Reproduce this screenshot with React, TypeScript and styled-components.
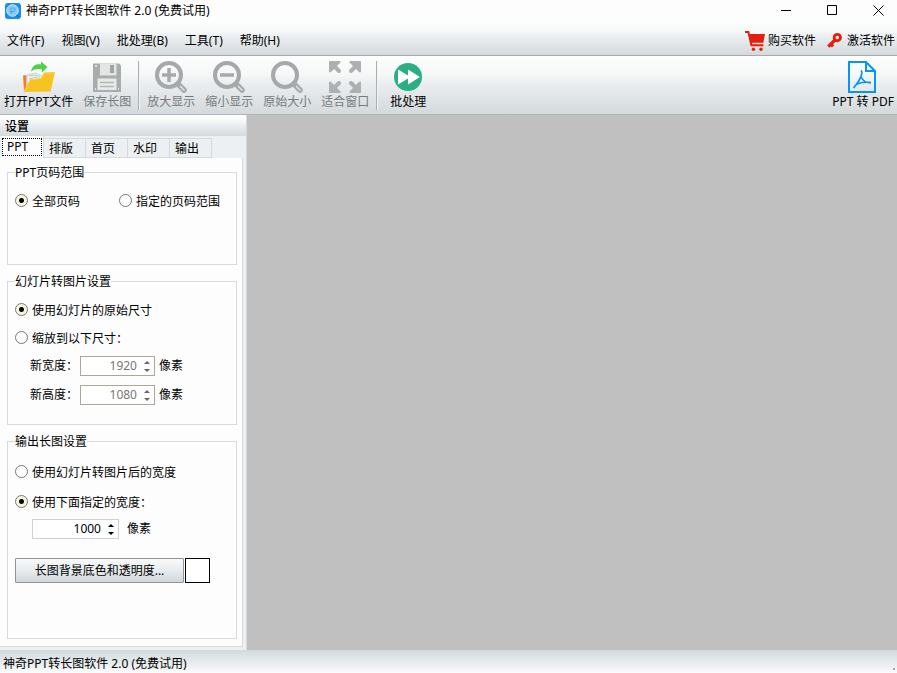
import React, { useState } from "react";
import styled, { createGlobalStyle, css } from "styled-components";

const GlobalStyle = createGlobalStyle`
  * { box-sizing: border-box; }
  body { margin: 0; background: #fdfdfd; }
  body, button, input {
    font-family: "Noto Sans", "Noto Sans CJK SC", sans-serif;
    font-size: 12px;
    line-height: 16px;
    color: #000;
  }
  button { background: none; border: 0; padding: 0; margin: 0; }
  svg { display: block; flex: none; }
`;

const barGradient = css`
  background: linear-gradient(#fdfdfd 0%, #f6f8f8 30%, #e9edef 50%, #d4d9dc 100%);
`;

const Window = styled.div`
  display: flex;
  flex-direction: column;
  min-height: 100vh;
`;

const TitleBar = styled.header`
  display: flex;
  align-items: center;
  height: 21px;
  padding-left: 5px;
  gap: 5px;
`;

const Title = styled.h1`
  flex: 1;
  margin: 0;
  font-size: 12px;
  font-weight: 400;
`;

const WindowControls = styled.div`
  display: flex;
  gap: 8px;
`;

const WindowButton = styled.button`
  display: flex;
  align-items: center;
  justify-content: center;
  width: 38px;
  height: 21px;
`;

const MenuBar = styled.nav`
  ${barGradient}
  display: flex;
  align-items: center;
  gap: 17px;
  height: 35px;
  padding: 5px 2px 0 7px;
  border-bottom: 1px solid #a8abad;
`;

const MenuButton = styled.button`
  white-space: nowrap;
`;

const MenuLinks = styled.div`
  display: flex;
  gap: 11px;
  margin-left: auto;
`;

const MenuLink = styled.a<{ $gap: number }>`
  display: flex;
  align-items: center;
  gap: ${(p) => p.$gap}px;
  height: 20px;
  color: #000;
  text-decoration: none;
  white-space: nowrap;
`;

const ToolBar = styled.div`
  ${barGradient}
  display: flex;
  align-items: flex-start;
  gap: 10px;
  height: 59px;
  padding: 5px 3px 0 4px;
  border-bottom: 1px solid #b2b5b7;
`;

const ToolButton = styled.button<{ $end?: boolean }>`
  display: flex;
  flex-direction: column;
  align-items: center;
  gap: 1px;
  min-width: 46px;
  white-space: nowrap;
  margin-left: ${(p) => (p.$end ? "auto" : "0")};
  &:disabled { color: #777b7d; }
`;

const Separator = styled.div`
  width: 2px;
  height: 49px;
  margin: 0 -3px;
  border-left: 1px solid #a9adaf;
  border-right: 1px solid #f3f5f6;
`;

const Body = styled.main`
  display: flex;
  flex: 1;
`;

const SidePanel = styled.aside`
  display: flex;
  flex-direction: column;
  flex: none;
  width: 247px;
  background: #ecf0f2;
  border-right: 1px solid #d5d9dc;
`;

const PanelHeading = styled.h2`
  ${barGradient}
  margin: 0;
  height: 21px;
  padding: 4px 5px 0;
  font-size: 12px;
  font-weight: 500;
`;

const TabStrip = styled.div`
  display: flex;
  align-items: flex-end;
  height: 22px;
  padding-left: 2px;
`;

const Tab = styled.button<{ $active: boolean }>`
  width: 42px;
  height: 20px;
  padding: 2px 5px 0;
  text-align: left;
  border: 1px solid #d5dadc;
  border-left: 0;
  ${(p) =>
    p.$active &&
    css`
      height: 22px;
      padding: 2px 1px 2px 0;
      background: #fdfdfd;
      border-top: 0;
      border-bottom: 0;
    `}
`;

const FocusFrame = styled.span`
  display: block;
  height: 18px;
  padding-left: 4px;
  border: 1px dotted #000;
`;

const TabPage = styled.div`
  display: flex;
  flex-direction: column;
  flex: 1;
  gap: 8px;
  margin: 0 3px 3px 0;
  padding: 6px 5px 7px 7px;
  background: #fdfdfd;
  border-right: 1px solid #d5dadc;
  border-bottom: 1px solid #d5dadc;
`;

const Group = styled.fieldset<{ $top?: number; $bottom: number; $fill?: boolean }>`
  margin: 0;
  min-width: 0;
  padding: ${(p) => p.$top ?? 12}px 7px ${(p) => p.$bottom}px;
  border: 1px solid #d5dadc;
  flex: ${(p) => (p.$fill ? "1" : "none")};
`;

const Legend = styled.legend`
  height: 16px;
  padding: 0;
  line-height: 18px;
`;

const Stack = styled.div<{ $gap: number }>`
  display: flex;
  flex-direction: column;
  align-items: flex-start;
  gap: ${(p) => p.$gap}px;
`;

const RadioRow = styled.div`
  display: grid;
  grid-template-columns: 104px 1fr;
`;

const RadioLabel = styled.label`
  display: flex;
  align-items: center;
  gap: 4px;
  height: 18px;
  padding-top: 2px;
  white-space: nowrap;
`;

const Radio = styled.input`
  appearance: none;
  width: 13px;
  height: 13px;
  margin: 0 0 4px;
  border: 1px solid #777;
  border-radius: 50%;
  background: #fff;
  &:checked {
    background: radial-gradient(circle, #000 0 2px, #f7f4dc 3px);
  }
`;

const FieldRow = styled.div<{ $gap: number; $indent: number }>`
  display: flex;
  align-items: center;
  gap: ${(p) => p.$gap}px;
  padding-left: ${(p) => p.$indent}px;
  line-height: 18px;
`;

const FieldLabel = styled.label`
  width: 46px;
  white-space: nowrap;
`;

const SpinFrame = styled.span<{ $width: number; $muted?: boolean }>`
  display: flex;
  align-items: center;
  width: ${(p) => p.$width}px;
  height: 20px;
  padding-right: 4px;
  gap: 7px;
  background: #fff;
  border: 1px solid ${(p) => (p.$muted ? "#aca899" : "#d0d0d0")};
`;

const SpinInput = styled.input`
  flex: 1;
  min-width: 0;
  width: 100%;
  height: 16px;
  padding: 0;
  border: 0;
  background: none;
  text-align: right;
  font-size: 12px;
  &:disabled { color: #777; }
`;

const SpinArrows = styled.span`
  display: flex;
  flex-direction: column;
  gap: 5px;
`;

const ColourRow = styled.div`
  display: flex;
  gap: 1px;
`;

const ColourButton = styled.button`
  width: 169px;
  height: 25px;
  background: linear-gradient(#f8fafa, #e8ecee 50%, #d0d6da);
  border: 1px solid #8f9395;
  border-radius: 1px;
`;

const Swatch = styled.button`
  width: 25px;
  height: 25px;
  background: #fff;
  border: 1px solid #000;
`;

const OutputSize = styled.div`
  display: flex;
  flex-direction: column;
  gap: 19px;
  padding-top: 8px;
`;

const Canvas = styled.section`
  flex: 1;
  background: #c0c0c0;
`;

const StatusBar = styled.footer`
  display: flex;
  height: 23px;
  padding: 6px 3px 0;
  background: linear-gradient(#d3d9dc, #e9edef 60%, #fbfcfc);
`;

const Grip = styled.span`
  width: 2px;
  height: 2px;
  margin: 12px -1px 0 auto;
  background: #a4a8aa;
`;

const AppIcon = () => (
  <svg width="16" height="16" viewBox="0 0 16 16">
    <rect width="16" height="16" rx="3" fill="#168ff0" />
    <circle cx="7.5" cy="7.500" r="5.800" fill="#8bcdf8" stroke="#c5e7fd" />
    <path d="M6 11V5h2.200a1.800 1.800 0 0 1 0 3.600H6" fill="none" stroke="#48a8ee" strokeWidth="1.200" />
    <path d="m11.500 12.500 2.500 1.500" stroke="#087bd4" strokeWidth="2" />
  </svg>
);

const CartIcon = () => (
  <svg width="20" height="20" viewBox="0 0 20 20">
    <path d="M0 1h3.400l3 13.200h12" fill="none" stroke="#e61d0d" strokeWidth="2" />
    <path d="M4 3h16l-1.700 8.800H6z" fill="#e61d0d" />
    <circle cx="8.500" cy="18.200" r="1.700" fill="#e61d0d" />
    <circle cx="16" cy="18.200" r="1.700" fill="#e61d0d" />
  </svg>
);

const KeyIcon = () => (
  <svg width="15" height="15" viewBox="0 0 15 15">
    <circle cx="10.3" cy="4.600" r="3.200" fill="none" stroke="#e61d0d" strokeWidth="2.800" />
    <path d="M8 7 1.200 13.600M3.800 11l2.300 2.300" stroke="#e61d0d" strokeWidth="3.200" />
  </svg>
);

const OpenIcon = () => (
  <svg width="32" height="32" viewBox="0 0 32 32">
    <path d="M0 14.500 3.500 14v13L1 30z" fill="#e9842d" />
    <path d="m4 14 9-2 7 4v7H4z" fill="#eef2f5" stroke="#bcc8cf" strokeWidth=".7" />
    <path d="m6 15 6-1 5 2M6 18l8-2" fill="none" stroke="#9fb4c3" strokeWidth=".7" />
    <path d="M1 31 7 18.500 18 17l3-5.500L32 11l-4.500 19.500z" fill="#f6c321" />
    <path d="M1 30.500 7 19l12-1.500 3-4.500 9.500-1" fill="none" stroke="#fad34a" />
    <path d="M8 10.500C9 5 13 2.300 18 3.500V.5L24.500 6 19 11.500v-3C14 7.500 11 8.200 8 10.500z" fill="#4fd243" />
  </svg>
);

const SaveIcon = () => (
  <svg width="32" height="32" viewBox="0 0 32 32">
    <path d="M2 2.500h26l2 2v26.500H2z" fill="#a9acac" />
    <path d="M9 2.500h16.500v12H9z" fill="#e3e5e5" />
    <path d="M19 4h4v8h-4z" fill="#a1a4a4" />
    <path d="M6.500 17.500h19v11.500h-19z" fill="#e8eaea" />
    <path d="M9 21.500h14M9 25.500h14" stroke="#b5b8b8" strokeWidth="1.500" />
    <path d="M4 5h2M4 28h1M27 28h1" stroke="#ddd" strokeWidth="2" />
  </svg>
);

const MagnifierIcon = ({ sign }: { sign?: "plus" | "minus" }) => (
  <svg width="32" height="32" viewBox="0 0 32 32">
    <circle cx="14" cy="14" r="12" fill="none" stroke="#a6a8a9" strokeWidth="4" />
    <path d="m23 23 6 6" stroke="#a6a8a9" strokeWidth="5.500" strokeLinecap="round" />
    <path d="m25 25 4.500 4.500" stroke="#dde0e1" strokeWidth="1.500" />
    {sign && <path d="M7 14h14" stroke="#a6a8a9" strokeWidth="3.500" />}
    {sign === "plus" && <path d="M14 7v14" stroke="#a6a8a9" strokeWidth="3.500" />}
  </svg>
);

const FitIcon = () => (
  <svg width="32" height="32" viewBox="0 0 32 32">
    <g fill="#adafb0" stroke="#adafb0">
      {[0, 90, 180, 270].map((angle) => (
        <g key={angle} transform={`rotate(${angle} 16 16)`}>
          <path d="M.5.500h10.500v1L1.500 11h-1z" strokeWidth="1" />
          <path d="m4 4 6 6" strokeWidth="4" strokeLinecap="round" />
        </g>
      ))}
    </g>
  </svg>
);

const BatchIcon = () => (
  <svg width="32" height="32" viewBox="0 0 32 32">
    <circle cx="16" cy="16" r="14" fill="#2aae83" />
    <path d="m6 8.500 10 6V8.500L28 16l-12 7.500v-6l-10 6z" fill="#fff" />
  </svg>
);

const PdfIcon = () => (
  <svg width="32" height="32" viewBox="0 0 32 32" fill="none" stroke="#0795f3" strokeWidth="2">
    <path d="M2 1h17l9 9v21H2zM19 1v9h9" />
    <path d="M14 9.500c2.300 2-.3 9-7.500 17.500M14.200 16c1.800 4 4.800 6 9.800 6M9 23.500c5-2.700 9.500-3 15-2" strokeWidth="1.700" />
  </svg>
);

const Arrow = ({ down, muted }: { down?: boolean; muted?: boolean }) => (
  <svg width="6" height="3" viewBox="0 0 6 3">
    <path d={down ? "M0 0h6L3 3z" : "M0 3h6L3 0z"} fill={muted ? "#666" : "#000"} />
  </svg>
);

interface SpinBoxProps {
  id: string;
  width: number;
  value: number;
  onChange: (value: number) => void;
  disabled?: boolean;
}

const SpinBox = ({ id, width, value, onChange, disabled }: SpinBoxProps) => (
  <SpinFrame $width={width} $muted={disabled}>
    <SpinInput
      id={id}
      inputMode="numeric"
      value={value}
      disabled={disabled}
      onChange={(e) => onChange(Number(e.target.value) || 0)}
    />
    <SpinArrows>
      <button type="button" aria-label="增加" disabled={disabled} onClick={() => onChange(value + 1)}>
        <Arrow muted={disabled} />
      </button>
      <button type="button" aria-label="减少" disabled={disabled} onClick={() => onChange(value - 1)}>
        <Arrow down muted={disabled} />
      </button>
    </SpinArrows>
  </SpinFrame>
);

interface OptionProps {
  name: string;
  checked: boolean;
  onSelect: () => void;
  children: React.ReactNode;
}

const Option = ({ name, checked, onSelect, children }: OptionProps) => (
  <RadioLabel>
    <Radio type="radio" name={name} checked={checked} onChange={onSelect} />
    {children}
  </RadioLabel>
);

const menus = ["文件(F)", "视图(V)", "批处理(B)", "工具(T)", "帮助(H)"];
const tabs = ["PPT", "排版", "首页", "水印", "输出"];

export default function App() {
  const [tab, setTab] = useState("PPT");
  const [range, setRange] = useState("all");
  const [size, setSize] = useState("original");
  const [output, setOutput] = useState("custom");
  const [slideWidth, setSlideWidth] = useState(1920);
  const [slideHeight, setSlideHeight] = useState(1080);
  const [outputWidth, setOutputWidth] = useState(1000);

  return (
    <Window>
      <GlobalStyle />
      <TitleBar>
        <AppIcon />
        <Title>神奇PPT转长图软件 2.0 (免费试用)</Title>
        <WindowControls>
          <WindowButton aria-label="最小化">
            <svg width="11" height="11" viewBox="0 0 11 11"><path d="M0 5.500h10" stroke="#000" /></svg>
          </WindowButton>
          <WindowButton aria-label="最大化">
            <svg width="11" height="11" viewBox="0 0 11 11"><path d="M.5.5h9v9h-9z" fill="none" stroke="#000" /></svg>
          </WindowButton>
          <WindowButton aria-label="关闭">
            <svg width="11" height="11" viewBox="0 0 11 11"><path d="m.5.5 10 10m0-10-10 10" stroke="#000" /></svg>
          </WindowButton>
        </WindowControls>
      </TitleBar>

      <MenuBar>
        {menus.map((menu) => <MenuButton key={menu}>{menu}</MenuButton>)}
        <MenuLinks>
          <MenuLink href="#buy" $gap={3}><CartIcon />购买软件</MenuLink>
          <MenuLink href="#activate" $gap={5}><KeyIcon />激活软件</MenuLink>
        </MenuLinks>
      </MenuBar>

      <ToolBar>
        <ToolButton><OpenIcon />打开PPT文件</ToolButton>
        <ToolButton disabled><SaveIcon />保存长图</ToolButton>
        <Separator />
        <ToolButton disabled><MagnifierIcon sign="plus" />放大显示</ToolButton>
        <ToolButton disabled><MagnifierIcon sign="minus" />缩小显示</ToolButton>
        <ToolButton disabled><MagnifierIcon />原始大小</ToolButton>
        <ToolButton disabled><FitIcon />适合窗口</ToolButton>
        <Separator />
        <ToolButton><BatchIcon />批处理</ToolButton>
        <ToolButton $end><PdfIcon />PPT 转 PDF</ToolButton>
      </ToolBar>

      <Body>
        <SidePanel>
          <PanelHeading>设置</PanelHeading>
          <TabStrip role="tablist">
            {tabs.map((name) => (
              <Tab key={name} role="tab" aria-selected={name === tab} $active={name === tab} onClick={() => setTab(name)}>
                {name === tab ? <FocusFrame>{name}</FocusFrame> : name}
              </Tab>
            ))}
          </TabStrip>
          <TabPage role="tabpanel">
            <Group $bottom={54}>
              <Legend>PPT页码范围</Legend>
              <RadioRow>
                <Option name="range" checked={range === "all"} onSelect={() => setRange("all")}>全部页码</Option>
                <Option name="range" checked={range === "some"} onSelect={() => setRange("some")}>指定的页码范围</Option>
              </RadioRow>
            </Group>

            <Group $bottom={19}>
              <Legend>幻灯片转图片设置</Legend>
              <Stack $gap={9}>
                <Stack $gap={10}>
                  <Option name="size" checked={size === "original"} onSelect={() => setSize("original")}>使用幻灯片的原始尺寸</Option>
                  <Option name="size" checked={size === "scaled"} onSelect={() => setSize("scaled")}>缩放到以下尺寸：</Option>
                </Stack>
                <FieldRow $gap={4} $indent={15}>
                  <FieldLabel htmlFor="slide-width">新宽度：</FieldLabel>
                  <SpinBox id="slide-width" width={75} value={slideWidth} onChange={setSlideWidth} disabled={size === "original"} />
                  像素
                </FieldRow>
                <FieldRow $gap={4} $indent={15}>
                  <FieldLabel htmlFor="slide-height">新高度：</FieldLabel>
                  <SpinBox id="slide-height" width={75} value={slideHeight} onChange={setSlideHeight} disabled={size === "original"} />
                  像素
                </FieldRow>
              </Stack>
            </Group>

            <Group $top={14} $bottom={54} $fill>
              <Legend>输出长图设置</Legend>
              <Stack $gap={12}>
                <Option name="output" checked={output === "slide"} onSelect={() => setOutput("slide")}>使用幻灯片转图片后的宽度</Option>
                <Option name="output" checked={output === "custom"} onSelect={() => setOutput("custom")}>使用下面指定的宽度：</Option>
              </Stack>
              <OutputSize>
                <FieldRow as="label" htmlFor="output-width" $gap={8} $indent={17}>
                  <SpinBox id="output-width" width={87} value={outputWidth} onChange={setOutputWidth} disabled={output === "slide"} />
                  像素
                </FieldRow>
                <ColourRow>
                  <ColourButton>长图背景底色和透明度...</ColourButton>
                  <Swatch aria-label="背景颜色" />
                </ColourRow>
              </OutputSize>
            </Group>
          </TabPage>
        </SidePanel>
        <Canvas />
      </Body>

      <StatusBar>
        神奇PPT转长图软件 2.0 (免费试用)
        <Grip />
      </StatusBar>
    </Window>
  );
}
